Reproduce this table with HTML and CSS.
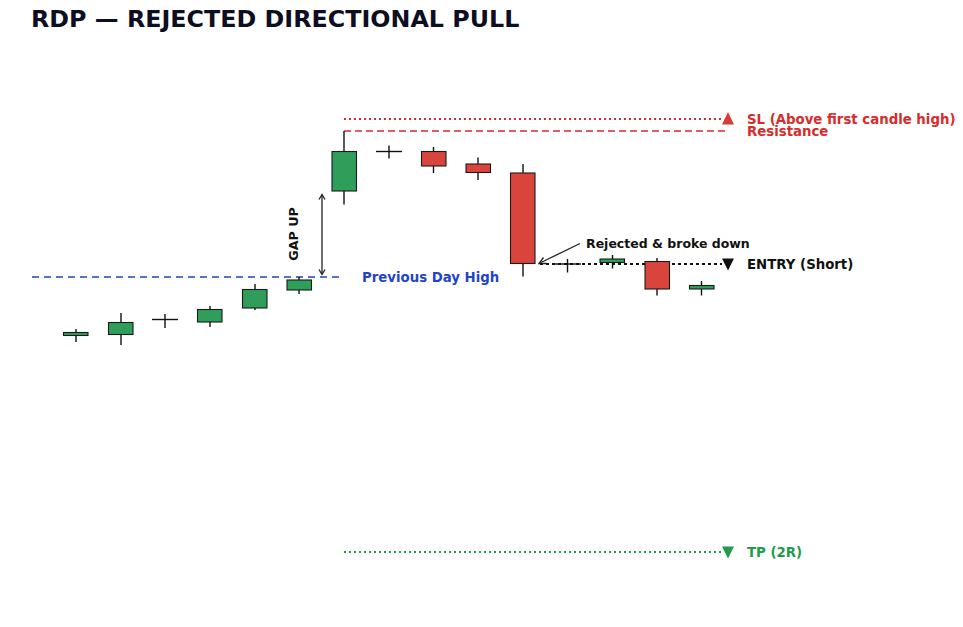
FILE: index.html
```html
<!DOCTYPE html>
<html>
<head>
<meta charset="utf-8">
<link rel="stylesheet" href="styles.css">
</head>
<body>
<div class="page">
  <h1 class="title">RDP — REJECTED DIRECTIONAL PULL</h1>
  <svg class="chart" viewBox="0 40 963 587" width="963" height="587">
    <!-- reference lines -->
    <line class="ln-sl" x1="344" y1="119" x2="722" y2="119"/>
    <line class="ln-res" x1="344" y1="131" x2="728" y2="131"/>
    <line class="ln-pdh" x1="32" y1="277" x2="344" y2="277"/>
    <line class="ln-entry" x1="540" y1="264" x2="722" y2="264"/>
    <line class="ln-tp" x1="344" y1="552" x2="722" y2="552"/>

    <!-- markers -->
    <polygon class="mk-red" points="728,112 734,124.5 722,124.5"/>
    <polygon class="mk-black" points="722,258.5 734,258.5 728,270.5"/>
    <polygon class="mk-green" points="722,546.5 734,546.5 728,558.5"/>

    <!-- candles -->
    <g class="wick">
      <line x1="76" y1="329" x2="76" y2="342"/>
      <line x1="121" y1="313" x2="121" y2="345"/>
      <line x1="165" y1="314" x2="165" y2="328"/>
      <line x1="152" y1="319.5" x2="178" y2="319.5"/>
      <line x1="210" y1="306" x2="210" y2="327"/>
      <line x1="255" y1="284" x2="255" y2="310"/>
      <line x1="299" y1="277" x2="299" y2="294"/>
      <line x1="344" y1="131" x2="344" y2="204.5"/>
      <line x1="389" y1="145.5" x2="389" y2="158.5"/>
      <line x1="376" y1="151.5" x2="402" y2="151.5"/>
      <line x1="433.5" y1="147" x2="433.5" y2="173"/>
      <line x1="478" y1="157.5" x2="478" y2="180"/>
      <line x1="523" y1="164" x2="523" y2="276.5"/>
      <line x1="567.5" y1="259" x2="567.5" y2="272.5"/>
      <line x1="555" y1="264" x2="581" y2="264"/>
      <line x1="612.5" y1="255" x2="612.5" y2="268.5"/>
      <line x1="657" y1="258" x2="657" y2="295.5"/>
      <line x1="701.5" y1="281" x2="701.5" y2="295.5"/>
    </g>
    <g class="body-up">
      <rect x="63.5" y="332.5" width="24.5" height="3"/>
      <rect x="108.5" y="322.5" width="24.5" height="12"/>
      <rect x="197.5" y="309.5" width="24.5" height="12.5"/>
      <rect x="242.5" y="289.5" width="24.5" height="18.5"/>
      <rect x="287" y="280" width="24.5" height="10"/>
      <rect x="332" y="151.5" width="24.5" height="39.5"/>
      <rect x="600" y="259" width="24.5" height="3.5"/>
      <rect x="689.5" y="285.5" width="24.5" height="3.5"/>
    </g>
    <g class="body-down">
      <rect x="421.5" y="151.5" width="24.5" height="14.5"/>
      <rect x="466" y="164" width="24.5" height="8.5"/>
      <rect x="510.5" y="173" width="24.5" height="90.5"/>
      <rect x="645" y="261.5" width="24.5" height="27.5"/>
    </g>

    <!-- gap up arrow -->
    <line class="arrow" x1="322" y1="196" x2="322" y2="273"/>
    <polyline class="arrow-head" points="319,199.5 322,194.5 325,199.5"/>
    <polyline class="arrow-head" points="319,269.5 322,274.5 325,269.5"/>
    <text class="lbl lbl-dark gap" transform="translate(297.5,234) rotate(-90)" text-anchor="middle">GAP UP</text>

    <!-- rejected arrow -->
    <line class="arrow" x1="580" y1="243.5" x2="540" y2="263"/>
    <polyline class="arrow-head" points="543.5,257.5 539,263.5 546.5,263.5"/>

    <!-- labels -->
    <text class="lbl lbl-red" x="747" y="123.5">SL (Above first candle high)</text>
    <text class="lbl lbl-red" x="747" y="136">Resistance</text>
    <text class="lbl lbl-blue" x="362" y="281.5">Previous Day High</text>
    <text class="lbl lbl-dark small" x="586" y="247.5">Rejected &amp; broke down</text>
    <text class="lbl lbl-dark" x="747" y="268.5">ENTRY (Short)</text>
    <text class="lbl lbl-green" x="747" y="557">TP (2R)</text>
  </svg>
</div>
</body>
</html>
```
FILE: styles.css
```css
html, body {
  margin: 0;
  padding: 0;
  background: #ffffff;
}
.page {
  width: 963px;
  height: 627px;
  display: flex;
  flex-direction: column;
  overflow: hidden;
  font-family: "DejaVu Sans", "Liberation Sans", sans-serif;
}
.title {
  margin: 0;
  height: 40px;
  padding: 4px 0 0 31px;
  box-sizing: border-box;
  font-size: 23.8px;
  font-weight: bold;
  color: #0e0e22;
  line-height: 30px;
  letter-spacing: 0;
}
.chart {
  display: block;
}
.ln-sl { stroke: #d62c2c; stroke-width: 1.8; stroke-dasharray: 2 3; }
.ln-res { stroke: #d62c2c; stroke-width: 1.5; stroke-dasharray: 7 4; }
.ln-pdh { stroke: #1f45b8; stroke-width: 1.5; stroke-dasharray: 7 5; }
.ln-entry { stroke: #111111; stroke-width: 1.8; stroke-dasharray: 3 3; }
.ln-tp { stroke: #1f9a4e; stroke-width: 1.8; stroke-dasharray: 2 3; }
.mk-red { fill: #d93b35; }
.mk-black { fill: #111111; }
.mk-green { fill: #22994f; }
.wick line { stroke: #111111; stroke-width: 1.4; }
.body-up rect { fill: #2e9e5a; stroke: #1a1a1a; stroke-width: 1.1; }
.body-down rect { fill: #d9443d; stroke: #1a1a1a; stroke-width: 1.1; }
.arrow { stroke: #222222; stroke-width: 1.3; }
.arrow-head { fill: none; stroke: #222222; stroke-width: 1.3; }
.lbl {
  font-family: "DejaVu Sans", "Liberation Sans", sans-serif;
  font-weight: bold;
  font-size: 13.3px;
}
.lbl-red { fill: #d62c2c; }
.lbl-blue { fill: #1f45c8; }
.lbl-dark { fill: #111111; }
.lbl-green { fill: #1f9a4e; }
.small { font-size: 12.5px; }
.gap { font-size: 12.7px; }
```
